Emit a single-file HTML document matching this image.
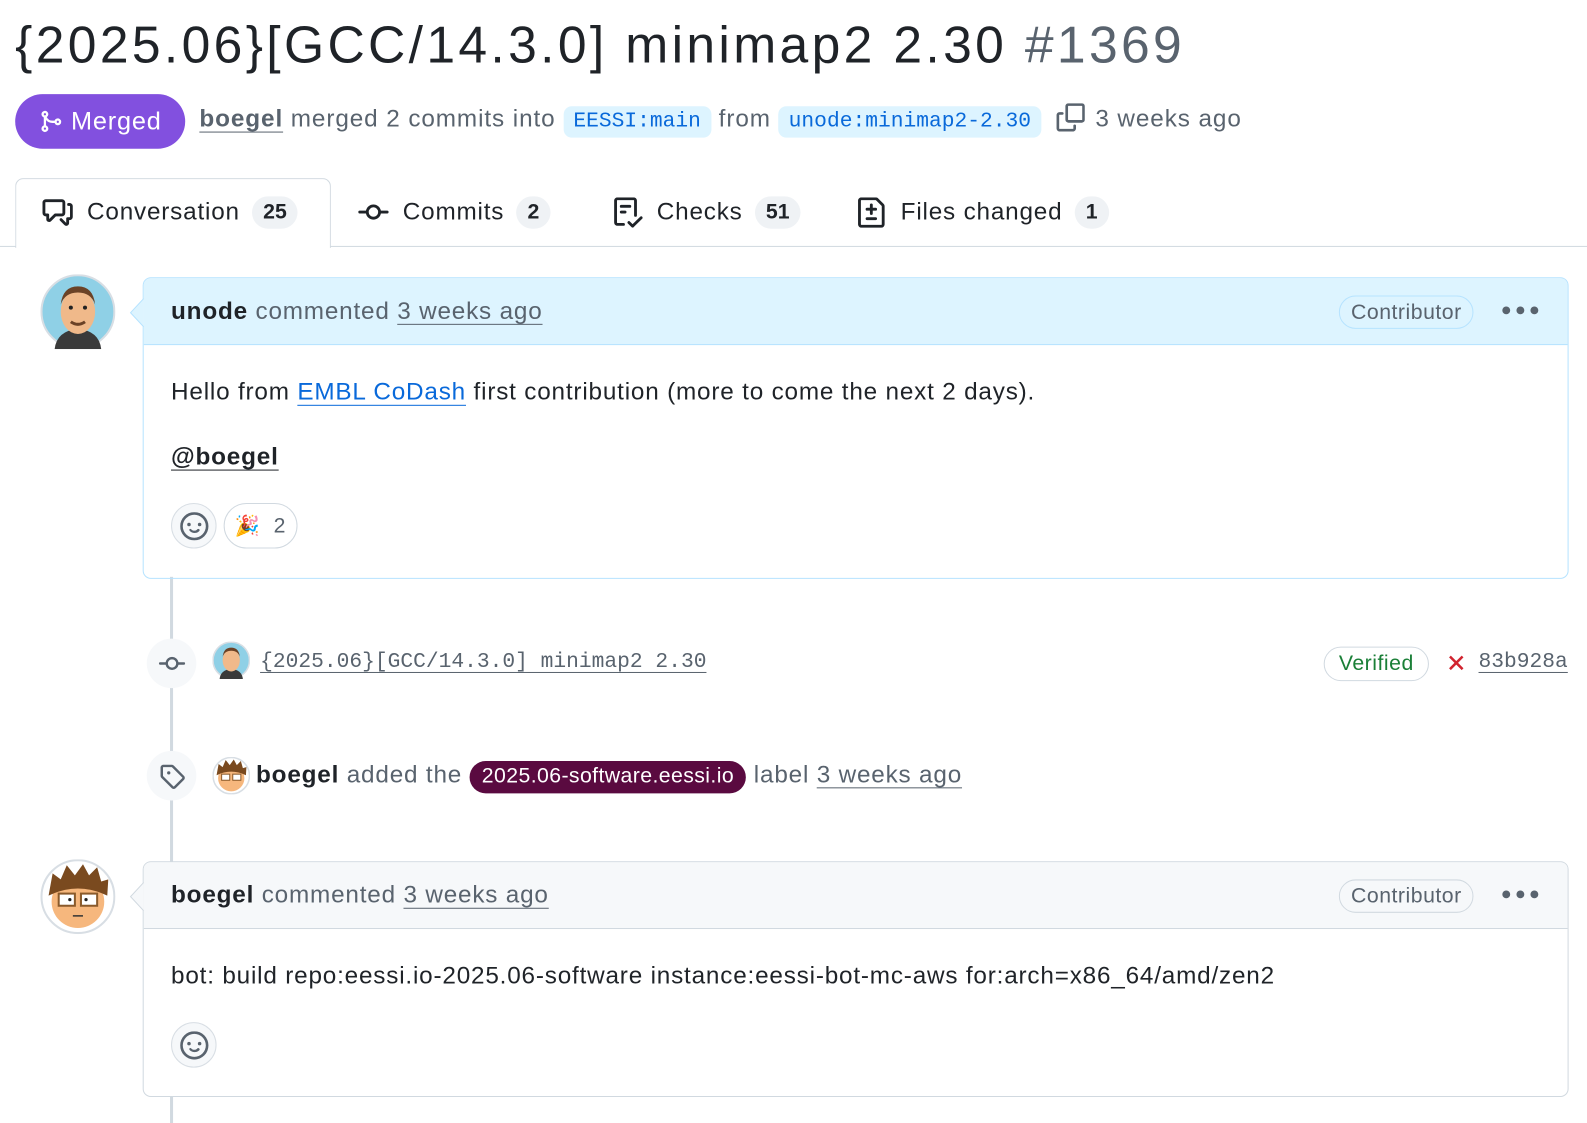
<!DOCTYPE html>
<html><head><meta charset="utf-8"><style>
*{margin:0;padding:0;box-sizing:border-box}
body{width:1587px;height:1108px;background:#fff;position:relative;overflow:hidden;font-family:"Liberation Sans","DejaVu Sans",sans-serif;color:#1f2328}
#w{position:absolute;left:0;top:0;width:1568px;height:1095px;transform:scale(1.012);transform-origin:0 0;letter-spacing:0.8px}
.a{position:absolute;white-space:nowrap}
.mono{font-family:"Liberation Mono","DejaVu Sans Mono",monospace;letter-spacing:0}
.g{color:#59636e}
.u{text-decoration:underline;text-underline-offset:5px;text-decoration-thickness:1px}
.cnt{display:inline-block;background:#eff2f5;border-radius:16px;padding:0 11px;font-size:21px;font-weight:bold;line-height:32px;margin-left:12px;vertical-align:middle;color:#1f2328;letter-spacing:0}
.tab{position:absolute;top:176px;height:68px;display:flex;align-items:center;font-size:24px}
.tab svg{margin-right:14px}
.dots{font-size:18px;letter-spacing:3px;color:#59636e}
</style></head><body><div id="w">

<div class="a" style="left:15px;top:12px;font-size:51px;line-height:66px;letter-spacing:3.3px">{2025.06}[GCC/14.3.0] minimap2 2.30 <span class="g">#1369</span></div>

<div class="a" style="left:15px;top:93px;width:168px;height:54px;border-radius:27px;background:#8250df;color:#fff;font-size:25px;display:flex;align-items:center;justify-content:center">
<svg width="24" height="24" viewBox="0 0 16 16" style="margin-right:8px"><path fill="#fff" d="M5.45 5.154A4.25 4.25 0 0 0 9.25 7.5h1.378a2.251 2.251 0 1 1 0 1.5H9.25A5.734 5.734 0 0 1 5 7.123v3.505a2.25 2.25 0 1 1-1.5 0V5.372a2.25 2.25 0 1 1 1.950-.218ZM4.25 13.5a.75.75 0 1 0 0-1.5.75.75 0 0 0 0 1.5Zm8.5-4.5a.75.75 0 1 0 0-1.5.75.75 0 0 0 0 1.5ZM5 3.25a.75.75 0 1 0 0 .005V3.25Z"/></svg>Merged</div>

<div class="a g" style="left:197px;top:102px;font-size:24px;line-height:32px;letter-spacing:0.9px"><b class="u" style="color:#59636e">boegel</b> merged 2 commits into <span class="mono" style="background:#ddf4ff;color:#0969da;border-radius:8px;padding:4px 10px;font-size:21px">EESSI:main</span> from <span class="mono" style="background:#ddf4ff;color:#0969da;border-radius:8px;padding:4px 10px;font-size:21px">unode:minimap2-2.30</span>
<svg width="28" height="28" viewBox="0 0 16 16" style="vertical-align:-5px;margin:0 10px 0 8px"><path fill="#59636e" d="M0 6.75C0 5.784.784 5 1.750 5h1.5a.75.75 0 0 1 0 1.5h-1.5a.25.25 0 0 0-.25.25v7.5c0 .138.112.25.25.25h7.5a.25.25 0 0 0 .25-.25v-1.5a.75.75 0 0 1 1.5 0v1.5A1.75 1.75 0 0 1 9.25 16h-7.5A1.75 1.75 0 0 1 0 14.25Z"/><path fill="#59636e" d="M5 1.75C5 .784 5.784 0 6.75 0h7.5C15.216 0 16 .784 16 1.75v7.5A1.75 1.75 0 0 1 14.25 11h-7.5A1.75 1.75 0 0 1 5 9.25Zm1.75-.25a.25.25 0 0 0-.25.25v7.5c0 .138.112.25.25.25h7.5a.25.25 0 0 0 .25-.25v-7.5a.25.25 0 0 0-.25-.25Z"/></svg>3 weeks ago</div>

<div class="a" style="left:0;top:243px;width:1587px;height:1px;background:#d1d9e0"></div>
<div class="a" style="left:15px;top:176px;width:312px;height:69px;border:1px solid #d1d9e0;border-bottom:none;border-radius:8px 8px 0 0;background:#fff"></div>
<div class="tab" style="left:42px"><svg width="30" height="30" viewBox="0 0 16 16"><path fill="#1f2328" d="M1.75 1h8.5c.966 0 1.75.784 1.75 1.750v5.5A1.75 1.75 0 0 1 10.25 10H7.061l-2.574 2.573A1.458 1.458 0 0 1 2 11.543V10h-.25A1.75 1.75 0 0 1 0 8.25v-5.5C0 1.784.784 1 1.75 1ZM1.5 2.75v5.5c0 .138.112.25.25.25h1a.75.75 0 0 1 .75.75v2.19l2.72-2.72a.749.749 0 0 1 .53-.22h3.5a.25.25 0 0 0 .25-.25v-5.5a.25.25 0 0 0-.25-.25h-8.5a.25.25 0 0 0-.25.25Zm13 2a.25.25 0 0 0-.25-.25h-.5a.75.75 0 0 1 0-1.5h.5c.966 0 1.75.784 1.75 1.75v5.5A1.75 1.75 0 0 1 14.25 12H14v1.543a1.458 1.458 0 0 1-2.487 1.03L9.22 12.28a.749.749 0 0 1 .326-1.275.749.749 0 0 1 .734.215l2.22 2.22v-2.19a.75.75 0 0 1 .75-.75h1a.25.25 0 0 0 .25-.25Z"/></svg>Conversation<span class="cnt">25</span></div>
<div class="tab" style="left:354px"><svg width="30" height="30" viewBox="0 0 16 16"><path fill="#1f2328" d="M11.93 8.5a4.002 4.002 0 0 1-7.86 0H.75a.75.75 0 0 1 0-1.5h3.32a4.002 4.002 0 0 1 7.86 0h3.32a.75.75 0 0 1 0 1.5Zm-1.43-.75a2.5 2.5 0 1 0-5 0 2.5 2.5 0 0 0 5 0Z"/></svg>Commits<span class="cnt">2</span></div>
<div class="tab" style="left:605px"><svg width="30" height="30" viewBox="0 0 16 16"><path fill="#1f2328" d="M2.5 1.75v11.5c0 .138.112.25.25.25h3.17a.75.75 0 0 1 0 1.5H2.75A1.75 1.75 0 0 1 1 13.25V1.75C1 .784 1.784 0 2.75 0h8.5C12.216 0 13 .784 13 1.75v7.736a.75.75 0 0 1-1.5 0V1.75a.25.25 0 0 0-.25-.25h-8.5a.25.25 0 0 0-.25.25Zm13.274 9.537v-.001l-4.557 4.45a.75.75 0 0 1-1.055-.008l-1.943-1.95a.75.75 0 0 1 1.062-1.058l1.419 1.425 4.026-3.932a.75.75 0 1 1 1.048 1.074ZM4.75 4h4.5a.75.75 0 0 1 0 1.5h-4.5a.75.75 0 0 1 0-1.5ZM4 7.75A.75.75 0 0 1 4.75 7h2a.75.75 0 0 1 0 1.5h-2A.75.75 0 0 1 4 7.75Z"/></svg>Checks<span class="cnt">51</span></div>
<div class="tab" style="left:846px"><svg width="30" height="30" viewBox="0 0 16 16"><path fill="#1f2328" d="M1 1.75C1 .784 1.784 0 2.75 0h7.586c.464 0 .909.184 1.237.513l2.914 2.914c.329.328.513.773.513 1.237v9.586A1.75 1.75 0 0 1 13.25 16H2.75A1.75 1.75 0 0 1 1 14.25Zm1.75-.25a.25.25 0 0 0-.25.25v12.5c0 .138.112.25.25.25h10.5a.25.25 0 0 0 .25-.25V4.664a.25.25 0 0 0-.073-.177l-2.914-2.914a.25.25 0 0 0-.177-.073ZM8 3.25a.75.75 0 0 1 .75.75v1.5h1.5a.75.75 0 0 1 0 1.5h-1.5v1.5a.75.75 0 0 1-1.5 0V7h-1.5a.75.75 0 0 1 0-1.5h1.5V4A.75.75 0 0 1 8 3.25Zm-3 8a.75.75 0 0 1 .75-.75h4.5a.75.75 0 0 1 0 1.5h-4.5a.75.75 0 0 1-.75-.75Z"/></svg>Files changed<span class="cnt">1</span></div>

<div class="a" style="left:168px;top:570px;width:3px;height:540px;background:#d1d9e0"></div>

<svg class="a" style="left:40px;top:271px" width="74" height="74" viewBox="0 0 74 74"><circle cx="37" cy="37" r="36" fill="#8fd0e6" stroke="#d8dee4" stroke-width="2"/><path d="M14 74 Q16 56 37 54 Q58 56 60 74Z" fill="#3a3a3a"/><ellipse cx="37" cy="37" rx="17" ry="22" fill="#f0b98a"/><path d="M20 30 Q22 12 37 12 Q52 12 54 30 Q50 18 37 18 Q24 18 20 30Z" fill="#6b4226"/><circle cx="30" cy="33" r="2" fill="#222"/><circle cx="44" cy="33" r="2" fill="#222"/><path d="M30 47 Q37 52 44 47" stroke="#6b4226" stroke-width="3" fill="none"/></svg>

<div class="a" style="left:141px;top:274px;width:1409px;height:298px;border:1px solid #b6e3ff;border-radius:8px;overflow:hidden">
<div style="height:66px;background:#ddf4ff;border-bottom:1px solid #b6e3ff"></div></div>
<svg class="a" style="left:128px;top:295px" width="15" height="28"><path d="M14 0 L1 14 L14 28" fill="#ddf4ff" stroke="#b6e3ff"/></svg>
<div class="a" style="left:169px;top:292px;font-size:24px;line-height:32px"><b>unode</b> <span class="g">commented <span class="u">3 weeks ago</span></span></div>
<div class="a g" style="left:1323px;top:292px;height:33px;padding:0 11px;border:1px solid #b6e3ff;border-radius:17px;font-size:21px;line-height:31px;letter-spacing:0.5px">Contributor</div>
<div class="a dots" style="left:1483px;top:296px">●●●</div>
<div class="a" style="left:169px;top:372px;font-size:24px;line-height:32px">Hello from <span class="u" style="color:#0969da">EMBL CoDash</span> first contribution (more to come the next 2 days).</div>
<div class="a" style="left:169px;top:436px;font-size:24px;line-height:32px"><b class="u">@boegel</b></div>
<div class="a" style="left:169px;top:497px;width:45px;height:45px;border-radius:50%;background:#f6f8fa;border:1px solid #d8dee4;display:flex;align-items:center;justify-content:center"><svg width="28" height="28" viewBox="0 0 16 16"><path fill="#59636e" d="M8 0a8 8 0 1 1 0 16A8 8 0 0 1 8 0ZM1.5 8a6.5 6.5 0 1 0 13 0 6.5 6.5 0 0 0-13 0Zm3.82 1.636a.75.75 0 0 1 1.038.175c.103.118.22.222.35.31.264.178.683.37 1.285.37.602 0 1.020-.192 1.285-.371.13-.088.247-.192.35-.31a.75.75 0 0 1 1.2.9c-.16.166-.338.316-.53.445-.63.418-1.37.638-2.127.629-.946 0-1.652-.308-2.126-.63a3.331 3.331 0 0 1-.715-.657.75.75 0 0 1 .183-1.044ZM12 7a1 1 0 1 1-2 0 1 1 0 0 1 2 0ZM5 8a1 1 0 1 1 0-2 1 1 0 0 1 0 2Z"/></svg></div>
<div class="a" style="left:221px;top:497px;width:73px;height:45px;border-radius:23px;border:1px solid #d1d9e0;font-size:21px;line-height:43px;padding-left:10px"><span style="font-size:20px">🎉</span> <span class="g" style="margin-left:6px">2</span></div>

<div class="a" style="left:145px;top:631px;width:49px;height:49px;border-radius:50%;background:#f6f8fa;display:flex;align-items:center;justify-content:center"><svg width="26" height="26" viewBox="0 0 16 16"><path fill="#59636e" d="M11.93 8.5a4.002 4.002 0 0 1-7.86 0H.75a.75.75 0 0 1 0-1.5h3.32a4.002 4.002 0 0 1 7.86 0h3.32a.75.75 0 0 1 0 1.5Zm-1.43-.75a2.5 2.5 0 1 0-5 0 2.5 2.5 0 0 0 5 0Z"/></svg></div>
<svg class="a" style="left:210px;top:634px" width="37" height="37" viewBox="0 0 74 74"><circle cx="37" cy="37" r="36" fill="#8fd0e6" stroke="#d8dee4" stroke-width="3"/><path d="M14 74 Q16 56 37 54 Q58 56 60 74Z" fill="#3a3a3a"/><ellipse cx="37" cy="37" rx="17" ry="22" fill="#f0b98a"/><path d="M20 30 Q22 12 37 12 Q52 12 54 30 Q50 18 37 18 Q24 18 20 30Z" fill="#6b4226"/></svg>
<div class="a mono g u" style="left:257px;top:640px;font-size:21px;line-height:30px">{2025.06}[GCC/14.3.0] minimap2 2.30</div>
<div class="a" style="left:1308px;top:639px;width:104px;height:34px;border:1px solid #d1d9e0;border-radius:17px;color:#1a7f37;font-size:21px;line-height:32px;text-align:center;letter-spacing:0.5px">Verified</div>
<svg class="a" style="left:1429px;top:645px" width="20" height="20" viewBox="0 0 16 16"><path d="M3 3L13 13M13 3L3 13" stroke="#d1242f" stroke-width="2"/></svg>
<div class="a mono g u" style="left:1461px;top:640px;font-size:21px;line-height:30px">83b928a</div>

<div class="a" style="left:145px;top:742px;width:49px;height:49px;border-radius:50%;background:#f6f8fa;display:flex;align-items:center;justify-content:center"><svg width="26" height="26" viewBox="0 0 16 16"><path fill="#59636e" d="M1 7.775V2.75C1 1.784 1.784 1 2.75 1h5.025c.464 0 .91.184 1.238.513l6.25 6.25a1.75 1.75 0 0 1 0 2.474l-5.026 5.026a1.75 1.75 0 0 1-2.474 0l-6.25-6.25A1.752 1.752 0 0 1 1 7.775Zm1.5 0c0 .066.026.13.073.177l6.25 6.250a.25.25 0 0 0 .354 0l5.025-5.025a.25.25 0 0 0 0-.354l-6.25-6.25a.25.25 0 0 0-.177-.073H2.75a.25.25 0 0 0-.25.25ZM6 5a1 1 0 1 1 0 2 1 1 0 0 1 0-2Z"/></svg></div>
<svg class="a" style="left:210px;top:748px" width="37" height="37" viewBox="0 0 74 74"><circle cx="37" cy="37" r="36" fill="#fff" stroke="#d8dee4" stroke-width="3"/><ellipse cx="37" cy="42" rx="26" ry="26" fill="#f6b77d"/><path d="M8 36 L12 14 L20 20 L26 6 L34 16 L42 5 L48 16 L56 8 L60 22 L67 20 L66 36 Q37 22 8 36Z" fill="#7a4a1f"/><rect x="18" y="34" width="16" height="12" fill="#fff" stroke="#8a5a2b" stroke-width="2"/><rect x="40" y="34" width="16" height="12" fill="#fff" stroke="#8a5a2b" stroke-width="2"/></svg>
<div class="a" style="left:253px;top:750px;font-size:24px;line-height:32px"><b>boegel</b> <span class="g">added the</span> <span style="background:#5a0a40;color:#fff;border-radius:16px;padding:1px 12px 3px;font-size:21px;display:inline-block;line-height:28px;letter-spacing:0.4px">2025.06-software.eessi.io</span> <span class="g">label <span class="u">3 weeks ago</span></span></div>

<svg class="a" style="left:40px;top:849px" width="74" height="74" viewBox="0 0 74 74"><circle cx="37" cy="37" r="36" fill="#fff" stroke="#d8dee4" stroke-width="2"/><ellipse cx="37" cy="42" rx="26" ry="26" fill="#f6b77d"/><path d="M8 36 L12 14 L20 20 L26 6 L34 16 L42 5 L48 16 L56 8 L60 22 L67 20 L66 36 Q37 22 8 36Z" fill="#7a4a1f"/><rect x="18" y="34" width="16" height="12" fill="#fff" stroke="#8a5a2b" stroke-width="2"/><rect x="40" y="34" width="16" height="12" fill="#fff" stroke="#8a5a2b" stroke-width="2"/><circle cx="29" cy="40" r="1.6" fill="#222"/><circle cx="45" cy="40" r="1.6" fill="#222"/><path d="M32 56 H42" stroke="#333" stroke-width="1.5"/></svg>

<div class="a" style="left:141px;top:851px;width:1409px;height:233px;border:1px solid #d1d9e0;border-radius:8px;overflow:hidden;background:#fff">
<div style="height:66px;background:#f6f8fa;border-bottom:1px solid #d1d9e0"></div></div>
<svg class="a" style="left:128px;top:872px" width="15" height="28"><path d="M14 0 L1 14 L14 28" fill="#f6f8fa" stroke="#d1d9e0"/></svg>
<div class="a" style="left:169px;top:869px;font-size:24px;line-height:32px"><b>boegel</b> <span class="g">commented <span class="u">3 weeks ago</span></span></div>
<div class="a g" style="left:1323px;top:869px;height:33px;padding:0 11px;border:1px solid #d1d9e0;border-radius:17px;font-size:21px;line-height:31px;letter-spacing:0.5px">Contributor</div>
<div class="a dots" style="left:1483px;top:873px">●●●</div>
<div class="a" style="left:169px;top:949px;font-size:24px;line-height:32px">bot: build repo:eessi.io-2025.06-software instance:eessi-bot-mc-aws for:arch=x86_64/amd/zen2</div>
<div class="a" style="left:169px;top:1010px;width:45px;height:45px;border-radius:50%;background:#f6f8fa;border:1px solid #d8dee4;display:flex;align-items:center;justify-content:center"><svg width="28" height="28" viewBox="0 0 16 16"><path fill="#59636e" d="M8 0a8 8 0 1 1 0 16A8 8 0 0 1 8 0ZM1.5 8a6.5 6.5 0 1 0 13 0 6.5 6.5 0 0 0-13 0Zm3.820 1.636a.75.75 0 0 1 1.038.175c.103.118.22.222.35.31.264.178.683.37 1.285.37.602 0 1.02-.192 1.285-.371.13-.088.247-.192.35-.31a.75.75 0 0 1 1.2.9c-.16.166-.338.316-.53.445-.63.418-1.37.638-2.127.629-.946 0-1.652-.308-2.126-.63a3.331 3.331 0 0 1-.715-.657.75.75 0 0 1 .183-1.044ZM12 7a1 1 0 1 1-2 0 1 1 0 0 1 2 0ZM5 8a1 1 0 1 1 0-2 1 1 0 0 1 0 2Z"/></svg></div>

</div></body></html>
